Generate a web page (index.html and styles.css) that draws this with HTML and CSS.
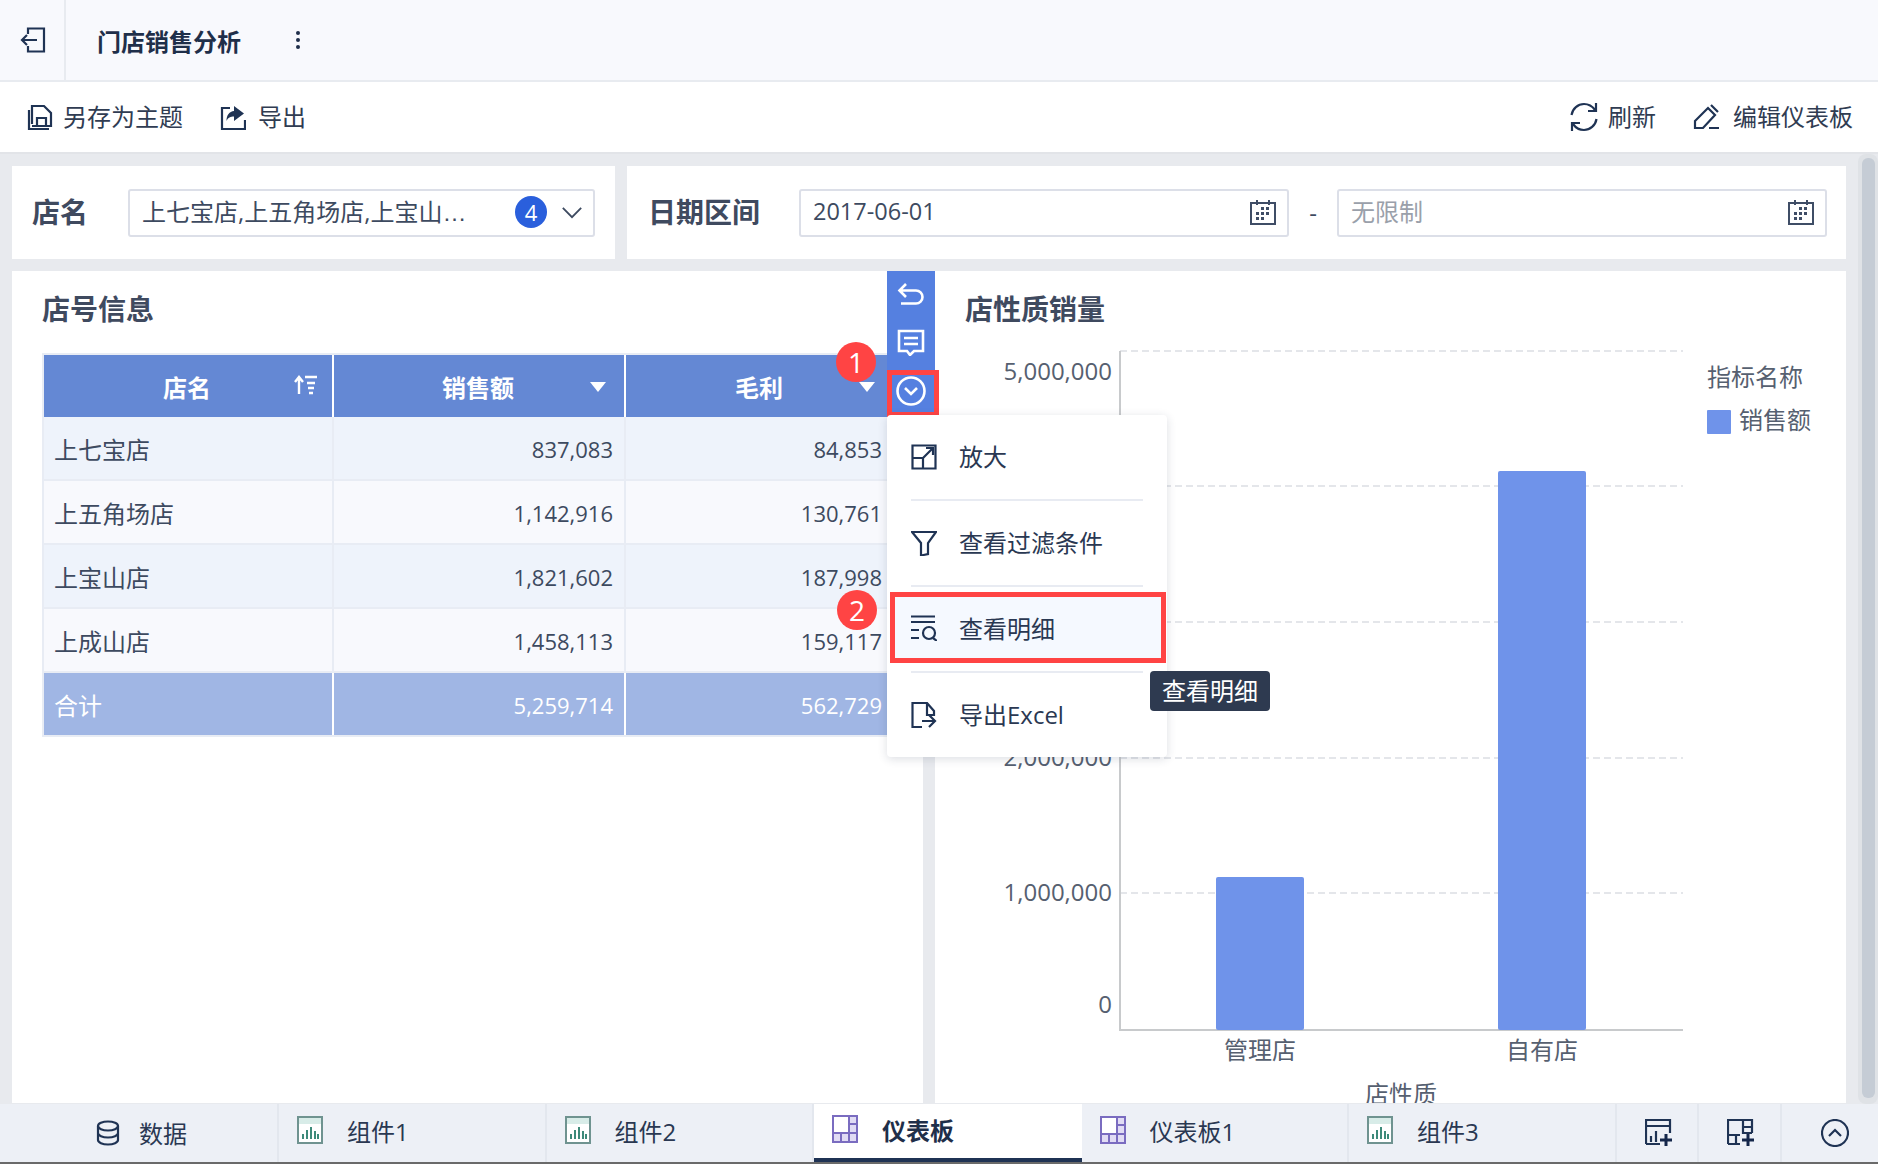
FILE: index.html
```html
<!DOCTYPE html>
<html lang="zh">
<head>
<meta charset="utf-8">
<title>门店销售分析</title>
<link rel="stylesheet" href="styles.css">
</head>
<body>
<div class="app">
  <header class="topbar">
    <div class="back">
      <svg class="ic26" viewBox="0 0 26 26"><path d="M8 7V1.500h16v23H8V19M17 13H2M7 8l-5 5 5 5"/></svg>
    </div>
    <div class="doc-title">门店销售分析</div>
    <div class="kebab"><i></i><i></i><i></i></div>
  </header>
  <div class="toolbar">
    <div class="tool">
      <svg class="ic26" viewBox="0 0 26 26"><path d="M5 20V2h12l7 7v13H5M2 6v19h20M10 22v-8h9v8"/></svg>
      <span>另存为主题</span>
    </div>
    <div class="tool tool-export">
      <svg class="ic26" viewBox="0 0 26 26"><path d="M10 4H2v21h23v-9"/><path class="fill" d="M14 2l10 7.500-10 7.500v-4.500c-3.500 0-6 1-7.500 4.500 0-6 3-9.500 7.500-10z"/></svg>
      <span>导出</span>
    </div>
    <div class="tool-spacer"></div>
    <div class="tool tool-refresh">
      <svg class="ic30" viewBox="0 0 30 30"><path d="M2.500 13C3.500 6.500 9 2 15 2c4.500 0 8.500 2.500 11 6M27.500 17C26.500 23.500 21 28 15 28c-4.500 0-8.500-2.500-11-6M27 1v8h-8M3 29v-8h8"/></svg>
      <span>刷新</span>
    </div>
    <div class="tool tool-edit">
      <svg class="ic28" viewBox="0 0 28 28"><path d="M2 18L15 5l7 7-12 13H2zM18 2l7 7M16 25h10"/></svg>
      <span>编辑仪表板</span>
    </div>
  </div>

  <div class="canvas">
    <main class="content">
      <section class="filters">
        <div class="filter filter-store">
          <div class="filter-label">店名</div>
          <div class="input input-store">
            <span class="input-text">上七宝店,上五角场店,上宝山<span class="ell">…</span></span>
            <span class="count">4</span>
            <svg class="chev" viewBox="0 0 24 14"><path d="M2 2l10 10L22 2"/></svg>
          </div>
        </div>
        <div class="filter filter-date">
          <div class="filter-label">日期区间</div>
          <div class="input input-date">
            <span class="input-text date-value">2017-06-01</span>
            <svg class="cal" viewBox="0 0 28 28"><path d="M2 5h24v21H2zM8 2v5M20 2v5"/><g class="dots"><rect x="12" y="9" width="3" height="3"/><rect x="17" y="9" width="3" height="3"/><rect x="7" y="14" width="3" height="3"/><rect x="12" y="14" width="3" height="3"/><rect x="17" y="14" width="3" height="3"/><rect x="7" y="19" width="3" height="3"/><rect x="12" y="19" width="3" height="3"/></g></svg>
          </div>
          <div class="dash">-</div>
          <div class="input input-date">
            <span class="input-text placeholder">无限制</span>
            <svg class="cal" viewBox="0 0 28 28"><path d="M2 5h24v21H2zM8 2v5M20 2v5"/><g class="dots"><rect x="12" y="9" width="3" height="3"/><rect x="17" y="9" width="3" height="3"/><rect x="7" y="14" width="3" height="3"/><rect x="12" y="14" width="3" height="3"/><rect x="17" y="14" width="3" height="3"/><rect x="7" y="19" width="3" height="3"/><rect x="12" y="19" width="3" height="3"/></g></svg>
          </div>
        </div>
      </section>

      <section class="panels">
        <article class="panel panel-table">
          <h2 class="panel-title">店号信息</h2>
          <div class="grid-table">
            <div class="cell head">店名
              <svg class="sort" viewBox="0 0 24 20"><path d="M5 19V3M1 7l4-5 4 5M11 2h12M13 8h8M14 13h6M15 18h4"/></svg>
            </div>
            <div class="cell head">销售额<i class="tri"></i></div>
            <div class="cell head last">毛利<i class="tri"></i></div>

            <div class="cell odd">上七宝店</div><div class="cell odd num">837,083</div><div class="cell odd num last">84,853</div>
            <div class="cell even">上五角场店</div><div class="cell even num">1,142,916</div><div class="cell even num last">130,761</div>
            <div class="cell odd">上宝山店</div><div class="cell odd num">1,821,602</div><div class="cell odd num last">187,998</div>
            <div class="cell even">上成山店</div><div class="cell even num">1,458,113</div><div class="cell even num last">159,117</div>
            <div class="cell total">合计</div><div class="cell total num">5,259,714</div><div class="cell total num last">562,729</div>
          </div>

          <div class="badge badge-1">1</div>
          <div class="badge badge-2">2</div>

          <div class="side-tools">
            <div class="side-btn">
              <svg class="ic-w" viewBox="0 0 28 28"><path d="M9 3L2.500 9.500 9 16M3 9.500h16a6.500 6.500 0 0 1 0 13H4"/></svg>
            </div>
            <div class="side-btn side-btn-2">
              <svg class="ic-w" viewBox="0 0 28 28"><path d="M2 3h24v20h-9l-4 4-3-4H2zM7 10h14M7 16h14"/></svg>
            </div>
            <div class="side-btn side-btn-on">
              <svg class="ic-w ic-w-lg" viewBox="0 0 30 30"><circle cx="15" cy="15" r="13.500"/><path d="M9 12l6 6 6-6"/></svg>
            </div>
          </div>

          <div class="menu">
            <div class="menu-item">
              <svg class="ic26" viewBox="0 0 26 26"><path d="M1.500 1.500h23v23h-23zM1.500 14H12v10.500M12 14l10-10M15 4h7v7"/></svg>
              <span>放大</span>
            </div>
            <div class="menu-sep"></div>
            <div class="menu-item">
              <svg class="ic26" viewBox="0 0 26 26"><path d="M1 2h24l-8 11v11l-7 1.500V13z"/></svg>
              <span>查看过滤条件</span>
            </div>
            <div class="menu-sep"></div>
            <div class="menu-item menu-item-hl">
              <svg class="ic26" viewBox="0 0 26 26"><path d="M0 1.500h24M0 7h24M0 15h8M0 23h8"/><circle cx="18" cy="18" r="6"/><path d="M22 23l4 3"/></svg>
              <span>查看明细</span>
            </div>
            <div class="menu-sep"></div>
            <div class="menu-item">
              <svg class="ic26" viewBox="0 0 26 26"><path d="M11 25H1.500V1H16l7 8v4h-7V1M11 19h13M18 13l6 6-6 6"/></svg>
              <span>导出Excel</span>
            </div>
          </div>
          <div class="tooltip">查看明细</div>
        </article>

        <article class="panel panel-chart">
          <h2 class="panel-title">店性质销量</h2>
          <svg class="chart" viewBox="0 0 911 772" width="911" height="772">
            <g class="gridlines">
              <path d="M185 20H748M185 155H748M185 291H748M185 427H748M185 562H748"/>
            </g>
            <path class="axis" d="M185 20V699H748"/>
            <rect class="bar" x="281" y="546" width="88" height="153" rx="2"/>
            <rect class="bar" x="563" y="140" width="88" height="559" rx="2"/>
            <g class="yl">
              <text x="177" y="40">5,000,000</text>
              <text x="177" y="155">4,000,000</text>
              <text x="177" y="291">3,000,000</text>
              <text x="177" y="426">2,000,000</text>
              <text x="177" y="561">1,000,000</text>
              <text x="177" y="673">0</text>
            </g>
            <g class="xl">
              <text x="325" y="719">管理店</text>
              <text x="607" y="719">自有店</text>
              <text x="466" y="763">店性质</text>
            </g>
            <g class="lg">
              <text x="772" y="46">指标名称</text>
              <rect class="bar" x="772" y="79" width="24" height="24" rx="1"/>
              <text x="804" y="89">销售额</text>
            </g>
          </svg>
        </article>
      </section>
    </main>
    <div class="scrolltrack"><div class="scrollthumb"></div></div>
  </div>

  <nav class="tabs">
    <div class="tab tab-data">
      <svg class="ic26" viewBox="0 0 26 26"><ellipse cx="13" cy="6" rx="10" ry="4.500"/><path d="M3 6v14c0 2.500 4.500 4.500 10 4.500s10-2 10-4.500V6M3 13c0 2.500 4.500 4.500 10 4.500S23 15.500 23 13"/></svg>
      <span>数据</span>
    </div>
    <div class="tab">
      <svg class="tab-ic" viewBox="0 0 26 28"><rect class="c-frame" x="1" y="1" width="24" height="26"/><rect class="c-band" x="2" y="2" width="22" height="6"/><path class="c-bars" d="M6 23v-5M10 23v-9M14 23v-12M18 23v-8M21 23v-5"/></svg>
      <span>组件1</span>
    </div>
    <div class="tab">
      <svg class="tab-ic" viewBox="0 0 26 28"><rect class="c-frame" x="1" y="1" width="24" height="26"/><rect class="c-band" x="2" y="2" width="22" height="6"/><path class="c-bars" d="M6 23v-5M10 23v-9M14 23v-12M18 23v-8M21 23v-5"/></svg>
      <span>组件2</span>
    </div>
    <div class="tab tab-on">
      <svg class="tab-ic" viewBox="0 0 26 28"><rect class="d-frame" x="1" y="1" width="24" height="26"/><rect class="d-white" x="2" y="2" width="15" height="15"/><path class="d-line" d="M1 18h24M17 2v16M17 9h8M9 18v9M17 18v9"/></svg>
      <span>仪表板</span>
    </div>
    <div class="tab">
      <svg class="tab-ic" viewBox="0 0 26 28"><rect class="d-frame" x="1" y="1" width="24" height="26"/><rect class="d-white" x="2" y="2" width="15" height="15"/><path class="d-line" d="M1 18h24M17 2v16M17 9h8M9 18v9M17 18v9"/></svg>
      <span>仪表板1</span>
    </div>
    <div class="tab">
      <svg class="tab-ic" viewBox="0 0 26 28"><rect class="c-frame" x="1" y="1" width="24" height="26"/><rect class="c-band" x="2" y="2" width="22" height="6"/><path class="c-bars" d="M6 23v-5M10 23v-9M14 23v-12M18 23v-8M21 23v-5"/></svg>
      <span>组件3</span>
    </div>
    <div class="tab-action tab-a1">
      <svg class="ic28" viewBox="0 0 28 28"><path d="M1 25V1h24v13M1 7h24M1 25h14M6 23v-6M11 23V12"/><path class="plus" d="M15 21h12M21 15v12"/></svg>
    </div>
    <div class="tab-action tab-a2">
      <svg class="ic28" viewBox="0 0 28 28"><path d="M1 25V1h24v13M16 1v13h9M16 8h9M1 16h12M9 16v9M1 25h12"/><path class="plus" d="M15 21h12M21 15v12"/></svg>
    </div>
    <div class="tab-action tab-a3">
      <svg class="ic28" viewBox="0 0 28 28"><circle cx="14" cy="14" r="13"/><path d="M8 17l6-6 6 6"/></svg>
    </div>
  </nav>
</div>
</body>
</html>
```

FILE: styles.css
```css
* { box-sizing: border-box; }
html, body { margin: 0; padding: 0; height: 100%; overflow: hidden; }
body {
  font-family: "Open Sans", "Noto Sans CJK SC", sans-serif;
  font-size: 24px;
  color: #3d4a60;
  background: #e8eaee;
}
svg { display: block; flex: none; fill: none; }
.app { width: 1878px; height: 1164px; display: flex; flex-direction: column; overflow: hidden; }

.ic26 { width: 26px; height: 26px; stroke: #1f3354; stroke-width: 2.200; }
.ic28 { width: 28px; height: 28px; stroke: #1f3354; stroke-width: 2.200; }
.ic30 { width: 30px; height: 30px; stroke: #1f3354; stroke-width: 2.200; }
.fill { fill: #1f3354; stroke: none; }
.plus { stroke: #14264a; stroke-width: 3; }

/* top bar */
.topbar { height: 82px; flex: none; display: flex; align-items: center; background: #f8f9fd; border-bottom: 2px solid #e8ebf0; }
.back { width: 66px; height: 80px; display: flex; align-items: center; padding-left: 20px; border-right: 2px solid #e8ebf0; }
.doc-title { margin-left: 31px; font-weight: 700; color: #1f2f4a; width: 199px; }
.kebab { display: flex; flex-direction: column; gap: 3px; width: 4px; }
.kebab i { width: 4px; height: 4px; background: #1f2f4a; border-radius: 50%; }

/* toolbar */
.toolbar { height: 72px; flex: none; display: flex; align-items: center; padding-left: 27px; background: #fff; border-bottom: 2px solid #e2e4e8; }
.tool { display: flex; align-items: center; gap: 10px; color: #303c52; }
.tool span { padding-bottom: 4px; }
.tool-export { margin-left: 37px; gap: 12px; }
.tool-spacer { flex: 1; }
.tool-refresh { gap: 9px; }
.tool-edit { margin-left: 37px; margin-right: 25px; gap: 12px; }

/* canvas */
.canvas { flex: 1; min-height: 0; display: flex; }
.content { flex: 1; min-width: 0; padding: 12px 12px 0; display: flex; flex-direction: column; gap: 12px; }
.scrolltrack { width: 20px; flex: none; background: #dfe2e6; border-radius: 8px; padding: 4px 3px 6px 4px; }
.scrollthumb { height: 100%; background: #c5ccd5; border-radius: 6px; }

/* filters */
.filters { height: 93px; flex: none; display: flex; gap: 12px; }
.filter { background: #fff; display: flex; align-items: center; }
.filter-store { width: 603px; padding-left: 20px; }
.filter-date { flex: 1; padding-left: 21px; }
.filter-label { font-size: 28px; font-weight: 700; color: #3f4a5f; padding-bottom: 3px; }
.filter-store .filter-label { width: 96px; }
.filter-date .filter-label { width: 151px; }
.input { height: 48px; display: flex; align-items: center; background: #fff; border: 2px solid #dcdfe8; border-radius: 3px; padding-left: 12px; }
.input-store { width: 467px; }
.input-date { width: 490px; padding-right: 10px; justify-content: space-between; }
.input-text { white-space: nowrap; color: #3d4a60; padding-bottom: 4px; }
.input-store .input-text { width: 373px; }
.ell { font-family: "Liberation Sans", sans-serif; }
.date-value { font-size: 23.500px; }
.placeholder { color: #9aa0aa; }
.count { width: 32px; height: 32px; margin-bottom: 2px; border-radius: 50%; background: #2a5fdc; color: #fff; display: flex; align-items: center; justify-content: center; font-size: 22px; }
.chev { width: 22px; height: 13px; margin-left: 14px; stroke: #3d4a60; stroke-width: 2; }
.cal { width: 28px; height: 28px; margin-bottom: 2px; stroke: #3f4d66; stroke-width: 2; }
.dots rect { fill: #3f4d66; stroke: none; }
.dash { width: 48px; text-align: center; color: #3d4a60; }

/* panels */
.panels { flex: 1; min-height: 0; display: flex; gap: 12px; margin-bottom: 1px; }
.panel { flex: 1; min-width: 0; background: #fff; position: relative; overflow: hidden; }
.panel-table { overflow: visible; z-index: 2; }
.panel-title { margin: 0; height: 60px; padding: 18px 0 0 30px; font-size: 28px; line-height: 40px; font-weight: 700; color: #3f4a5f; }
.grid-table { margin: 22px 0 0 30px; width: 854px; display: grid; grid-template-columns: 290px 292px 268px; background: #e8ecf4; border: 2px solid #e8ecf4; }
.cell { height: 64px; display: flex; align-items: center; padding: 0 12px 0 10px; border-right: 2px solid #e8ecf4; border-bottom: 2px solid #e8ecf4; position: relative; }
.cell.last { border-right: 0; }
.head { height: 62px; background: #6488d4; color: #fff; font-weight: 700; justify-content: center; border-right-color: #fff; border-bottom: 0; }
.odd { background: #eef3fb; }
.even { background: #f8f9fd; }
.total { height: 62px; background: #a0b6e4; color: #fff; border-right-color: #fff; border-bottom: 0; }
.num { justify-content: flex-end; font-size: 22px; padding-top: 2px; padding-right: 11px; }
.num.last { padding-right: 12px; }
.sort { position: absolute; right: 14px; top: 20px; width: 24px; height: 20px; stroke: #fff; stroke-width: 2.400; }
.tri { position: absolute; right: 18px; top: 27px; width: 0; height: 0; border-left: 8px solid transparent; border-right: 8px solid transparent; border-top: 10px solid #fff; }
.last .tri { right: 19px; }

/* overlays */
.badge { position: absolute; width: 40px; height: 40px; border-radius: 50%; background: #ff4444; color: #fff; font-size: 28px; display: flex; align-items: center; justify-content: center; z-index: 6; }
.badge-1 { left: 824px; top: 71px; }
.badge-2 { left: 825px; top: 319px; }
.side-tools { position: absolute; left: 875px; top: 0; width: 48px; height: 146px; background: #5580e0; display: flex; flex-direction: column; align-items: flex-start; z-index: 4; }
.side-btn { height: 50px; width: 48px; display: flex; justify-content: center; padding-top: 10px; }
.side-btn-2 { height: 49px; padding-top: 7px; }
.side-btn-on { width: 52px; height: 47px; border: 5px solid #ff4444; padding: 0 4px 6px 0; align-items: center; }
.ic-w { width: 28px; height: 28px; stroke: #fff; stroke-width: 2.600; }
.ic-w-lg { width: 30px; height: 30px; }
.menu { position: absolute; left: 875px; top: 144px; width: 280px; height: 342px; background: #fff; border-radius: 4px; box-shadow: 0 2px 10px rgba(40, 50, 80, .16); z-index: 5; color: #2a3852; }
.menu-item { height: 84px; display: flex; align-items: center; gap: 22px; padding-left: 24px; white-space: nowrap; }
.menu-item span { padding-bottom: 4px; }
.menu-sep { height: 2px; margin: 0 24px; background: #e8ebf2; }
.menu-item-hl { height: 71px; margin: 5px 1px 8px 3px; border: 5px solid #ff4444; background: #f5f9ff; padding-left: 16px; }
.menu-item-hl span { padding-bottom: 0; }
.tooltip { position: absolute; left: 1138px; top: 400px; width: 120px; height: 40px; padding-bottom: 3px; background: #2e3a50; color: #fff; border-radius: 4px; display: flex; align-items: center; justify-content: center; z-index: 7; }

/* chart */
.chart text { font-size: 24px; fill: #566070; dominant-baseline: central; transform: translateY(-1px); }
.chart .yl text { text-anchor: end; }
.chart .xl text { text-anchor: middle; }
.gridlines path { stroke: #e4e6ea; stroke-width: 2; stroke-dasharray: 7 4; }
.axis { stroke: #c8cacc; stroke-width: 2; }
.bar { fill: #6f93ea; }

/* tabs */
.tabs { height: 60px; flex: none; display: flex; background: #edf0f6; border-bottom: 2px solid #6a6a6a; }
.tab { width: 267.500px; display: flex; align-items: center; gap: 24px; padding: 0 0 6px 18px; border-right: 2px solid #e3e7ee; color: #2a3852; }
.tab-data { width: 279px; padding-left: 95px; gap: 18px; padding-bottom: 0; }
.tab-data span { padding-bottom: 2px; }
.tab-on { background: #fff; font-weight: 700; border-right: 0; border-bottom: 4px solid #1f3354; padding-bottom: 4px; color: #1f2f4a; }
.tab-ic { width: 26px; height: 28px; }
.c-frame { fill: #fff; stroke: #6f9390; stroke-width: 2; }
.c-band { fill: #d8ece8; }
.c-bars { stroke: #3d8a7a; stroke-width: 2; }
.d-frame { fill: #e1dcf4; stroke: #7a6cc0; stroke-width: 2; }
.d-white { fill: #fff; }
.d-line { stroke: #7a6cc0; stroke-width: 2; }
.tab-action { display: flex; align-items: center; justify-content: center; border-right: 2px solid #e3e7ee; }
.tab-a1 { width: 82px; padding-left: 4px; }
.tab-a2 { width: 83px; padding-left: 4px; }
.tab-a3 { flex: 1; border-right: 0; padding-left: 10px; }
```
